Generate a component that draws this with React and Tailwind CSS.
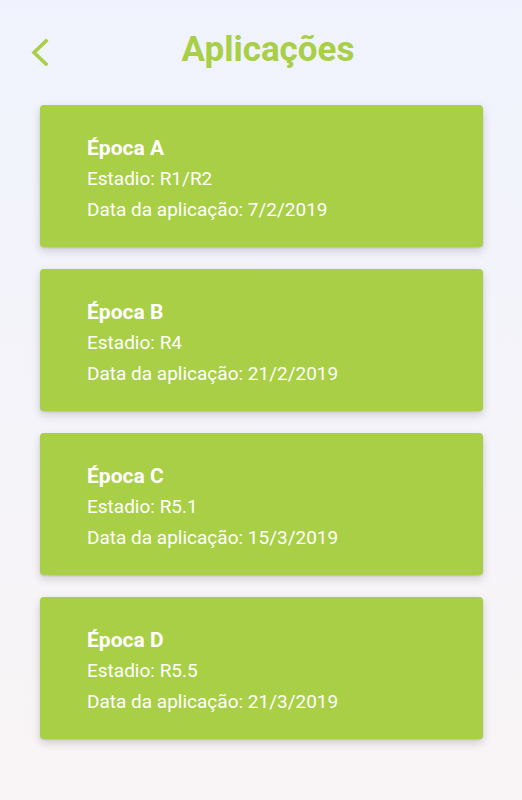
import React from "react";

const items = [
  { epoca: "Época A", estadio: "R1/R2", data: "7/2/2019" },
  { epoca: "Época B", estadio: "R4", data: "21/2/2019" },
  { epoca: "Época C", estadio: "R5.1", data: "15/3/2019" },
  { epoca: "Época D", estadio: "R5.5", data: "21/3/2019" },
];

export default function App() {
  return (
    <div
      className="min-h-[800px] bg-gradient-to-b from-[#f0f3fd] to-[#f9f5f6] font-['Roboto',sans-serif]"
    >
      {/* Header */}
      <div className="relative h-[105px] flex items-start justify-center pt-[27px]">
        <button className="absolute left-[29px] top-[38px] p-0" aria-label="Voltar">
          <svg width="22" height="28" viewBox="0 0 22 28" fill="none">
            <path d="M17 3 L5 14.5 L17 26" stroke="#a8cf45" strokeWidth="3.6" strokeLinecap="square" />
          </svg>
        </button>
        <h1 className="text-[35px] leading-[46px] font-bold text-[#a8cf45] ml-[14px]">Aplicações</h1>
      </div>

      {/* Cards */}
      <div className="flex flex-col gap-[22px] pl-[40px] pr-[39px]">
        {items.map((it) => (
          <div
            key={it.epoca}
            className="h-[142px] rounded-[4px] bg-[#a8cf45] shadow-[0_4px_10px_rgba(0,0,0,0.16),0_1px_2px_rgba(0,0,0,0.12)] pl-[47px] pt-[29px] text-white"
          >
            <h2 className="text-[21px] leading-[28px] font-bold">{it.epoca}</h2>
            <p className="text-[19px] leading-[31px] mt-[1px]">Estadio: {it.estadio}</p>
            <p className="text-[19px] leading-[31px]">Data da aplicação: {it.data}</p>
          </div>
        ))}
      </div>
    </div>
  );
}
